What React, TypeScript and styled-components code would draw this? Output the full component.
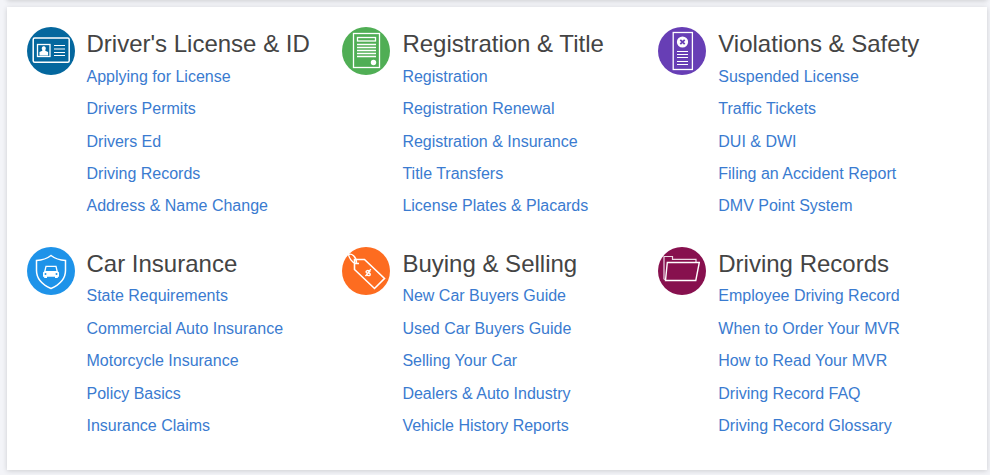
import React from 'react';
import styled, { createGlobalStyle } from 'styled-components';

const GlobalStyle = createGlobalStyle`
  * { box-sizing: border-box; }
  body {
    margin: 0;
    background: #f3f4f8;
    font-family: "Liberation Sans", Arial, sans-serif;
    overflow: hidden;
  }
`;

const Page = styled.div`
  height: 475px;
  padding: 0 3px 0 7px;
  overflow: hidden;
`;

const PreviousCard = styled.div`
  height: 10px;
  margin-top: -10px;
  background: #fff;
  box-shadow: 0 1px 5px rgba(0, 0, 0, 0.16);
`;

const Card = styled.main`
  height: 463px;
  margin-top: 7px;
  padding: 20px 13px 0 19.5px;
  background: #fff;
  box-shadow: 0 1px 5px rgba(0, 0, 0, 0.16);
`;

const Grid = styled.div`
  display: grid;
  grid-template-columns: repeat(3, 315.9px);
  grid-auto-rows: 219.55px;
`;

const Section = styled.section`
  display: flex;
  align-items: flex-start;
  gap: 12px;
`;

const Icon = styled.svg`
  display: block;
  flex: none;
  width: 48px;
  height: 48px;
  fill: none;
  stroke: #fff;
`;

const Content = styled.div`
  flex: 1;
  min-width: 0;
`;

const Title = styled.h2`
  margin: 0;
  font-size: 24px;
  font-weight: 400;
  line-height: 33px;
  color: #444;
  white-space: nowrap;
`;

const Links = styled.ul`
  margin: 0;
  padding: 0.72px 0 0;
  list-style: none;
`;

const Item = styled.li`
  height: 32.44px;
  line-height: 32.4px;
  font-size: 16px;
  white-space: nowrap;
`;

const Link = styled.a`
  color: #3a7bd0;
  text-decoration: none;
`;

const LicenseIcon = () => (
  <Icon viewBox="0 0 48 48">
    <circle cx="24" cy="24" r="24" fill="#04679e" stroke="none" />
    <rect x="6.2" y="11" width="36" height="24.2" rx="1.5" strokeWidth="1.5" />
    <rect x="10.5" y="17.5" width="12.5" height="12" strokeWidth="1.3" />
    <path d="M12.5 28.5V25l2.8-1.2V23c-1.4-2.5.3-3.8 1.5-3.8s2.9 1.3 1.5 3.8v.8l2.8 1.2v3.5z" fill="#fff" stroke="none" />
    <path d="M27 18.5h11M27 22h11M27 25.5h11M27 28.5h11" strokeWidth="1.2" />
  </Icon>
);

const RegistrationIcon = () => (
  <Icon viewBox="0 0 48 48">
    <circle cx="24" cy="24" r="24" fill="#50ae55" stroke="none" />
    <rect x="11.5" y="6.5" width="26" height="34" strokeWidth="1.3" />
    <rect x="15.5" y="10.5" width="18" height="3.5" strokeWidth="1.3" />
    <path d="M15 17.5h19M15 20.5h19M15 23.5h19M15 26.5h19M15 29.5h19" strokeWidth="1.3" />
    <circle cx="31.5" cy="35.5" r="2.7" fill="#fff" stroke="none" />
  </Icon>
);

const ViolationIcon = () => (
  <Icon viewBox="0 0 48 48">
    <circle cx="24" cy="24" r="24" fill="#673eb5" stroke="none" />
    <rect x="15.2" y="5.5" width="19.2" height="37" strokeWidth="1.3" />
    <circle cx="24.5" cy="15" r="5.6" fill="#fff" stroke="none" />
    <path d="m22.3 12.800 4.400 4.400m0-4.400-4.400 4.400" stroke="#673eb5" strokeWidth="1.8" />
    <path d="M19 24.5h11M19 27.5h11M19 30.5h11M19 34.5h11M19 37.5h11" strokeWidth="1.2" />
  </Icon>
);

const InsuranceIcon = () => (
  <Icon viewBox="0 0 48 48">
    <circle cx="24" cy="24" r="24" fill="#1e93e9" stroke="none" />
    <path d="M24 8.5c-4.500 3.500-9.200 4.700-14.500 5v10c0 8.500 5.500 14 14.500 18 9-4 14.500-9.500 14.500-18v-10c-5.300-.3-10-1.500-14.500-5z" strokeWidth="1.5" />
    <path d="m17.800 24.500 1.200-5.200h10l1.200 5.200" strokeWidth="1.3" />
    <path d="M16 25.500 17.500 24h13l1.500 1.500v4.200h-1.200V31H28v-1.300h-8V31h-2.800v-1.300H16z" fill="#fff" stroke="none" />
    <circle cx="18.5" cy="27" r="1" fill="#1e93e9" stroke="none" />
    <circle cx="29.5" cy="27" r="1" fill="#1e93e9" stroke="none" />
  </Icon>
);

const TagIcon = () => (
  <Icon viewBox="0 0 48 48">
    <circle cx="24" cy="24" r="24" fill="#fd6c20" stroke="none" />
    <path d="M12.5 12.5h10l20 19-10 10-20-19z" strokeWidth="1.6" />
    <path d="M17 16.500h-3.500C10 15.500 7 11 6.500 7.500c3-1.500 8 2 8 8.500" strokeWidth="1.4" />
    <path d="M28.300 24.800c-2-2.300-5-1-4 .7s2.700-.5 3.700 1.200-1.700 3-3.700.5m4.500-5-5.300 7" strokeWidth="1.4" />
  </Icon>
);

const FolderIcon = () => (
  <Icon viewBox="0 0 48 48">
    <circle cx="24" cy="24" r="24" fill="#87104e" stroke="none" />
    <path d="M8 33 6 32V9.5h8.500v2.800H38V15" strokeWidth="1.2" stroke="#edd8e4" />
    <path d="M9.300 15.500h32l-3.500 18H7.500z" strokeWidth="1.4" />
  </Icon>
);

const sections = [
  {
    title: "Driver's License & ID",
    icon: LicenseIcon,
    links: ['Applying for License', 'Drivers Permits', 'Drivers Ed', 'Driving Records', 'Address & Name Change'],
  },
  {
    title: 'Registration & Title',
    icon: RegistrationIcon,
    links: ['Registration', 'Registration Renewal', 'Registration & Insurance', 'Title Transfers', 'License Plates & Placards'],
  },
  {
    title: 'Violations & Safety',
    icon: ViolationIcon,
    links: ['Suspended License', 'Traffic Tickets', 'DUI & DWI', 'Filing an Accident Report', 'DMV Point System'],
  },
  {
    title: 'Car Insurance',
    icon: InsuranceIcon,
    links: ['State Requirements', 'Commercial Auto Insurance', 'Motorcycle Insurance', 'Policy Basics', 'Insurance Claims'],
  },
  {
    title: 'Buying & Selling',
    icon: TagIcon,
    links: ['New Car Buyers Guide', 'Used Car Buyers Guide', 'Selling Your Car', 'Dealers & Auto Industry', 'Vehicle History Reports'],
  },
  {
    title: 'Driving Records',
    icon: FolderIcon,
    links: ['Employee Driving Record', 'When to Order Your MVR', 'How to Read Your MVR', 'Driving Record FAQ', 'Driving Record Glossary'],
  },
];

export default function App() {
  return (
    <>
      <GlobalStyle />
      <Page>
        <PreviousCard />
        <Card>
          <Grid>
            {sections.map(({ title, icon: SectionIcon, links }) => (
              <Section key={title}>
                <SectionIcon />
                <Content>
                  <Title>{title}</Title>
                  <Links>
                    {links.map((label) => (
                      <Item key={label}>
                        <Link href="#">{label}</Link>
                      </Item>
                    ))}
                  </Links>
                </Content>
              </Section>
            ))}
          </Grid>
        </Card>
      </Page>
    </>
  );
}
